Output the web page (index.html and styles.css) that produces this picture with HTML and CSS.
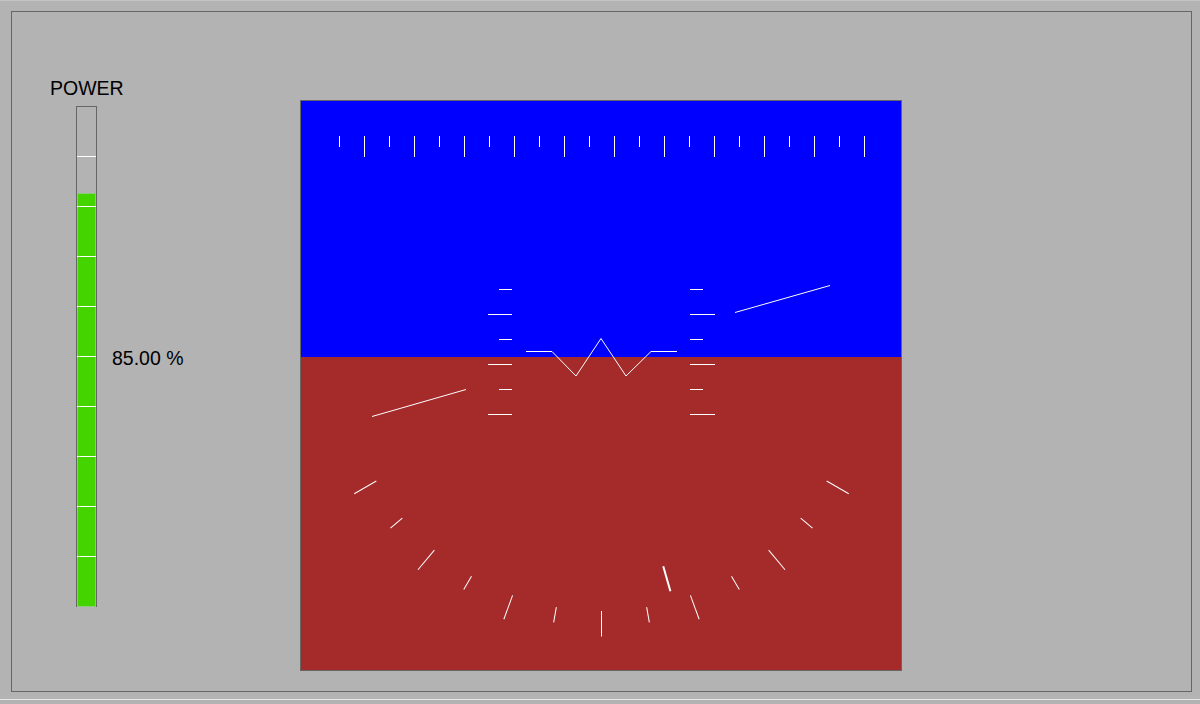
FILE: index.html
```html
<!DOCTYPE html>
<html>
<head>
<meta charset="utf-8">
<link rel="stylesheet" href="styles.css">
</head>
<body>
<div class="frame">
  <div class="power-col">
    <div class="label">POWER</div>
    <div class="bar-row">
      <div class="bar">
        <div class="fill" style="height:412px"></div>
      </div>
      <div class="value">85.00 %</div>
    </div>
  </div>
  <div class="gauge">
    <svg class="adi" width="600" height="569" viewBox="0 0 600 569">
      <rect class="sky" x="0" y="0" width="600" height="256"/>
      <rect class="ground" x="0" y="256" width="600" height="313"/>
      <g class="crisp">
        <line x1="38.5" y1="35" x2="38.5" y2="46"/>
        <line x1="63.5" y1="35" x2="63.5" y2="56"/>
        <line x1="88.5" y1="35" x2="88.5" y2="46"/>
        <line x1="113.5" y1="35" x2="113.5" y2="56"/>
        <line x1="138.5" y1="35" x2="138.5" y2="46"/>
        <line x1="163.5" y1="35" x2="163.5" y2="56"/>
        <line x1="188.5" y1="35" x2="188.5" y2="46"/>
        <line x1="213.5" y1="35" x2="213.5" y2="56"/>
        <line x1="238.5" y1="35" x2="238.5" y2="46"/>
        <line x1="263.5" y1="35" x2="263.5" y2="56"/>
        <line x1="288.5" y1="35" x2="288.5" y2="46"/>
        <line x1="313.5" y1="35" x2="313.5" y2="56"/>
        <line x1="338.5" y1="35" x2="338.5" y2="46"/>
        <line x1="363.5" y1="35" x2="363.5" y2="56"/>
        <line x1="388.5" y1="35" x2="388.5" y2="46"/>
        <line x1="413.5" y1="35" x2="413.5" y2="56"/>
        <line x1="438.5" y1="35" x2="438.5" y2="46"/>
        <line x1="463.5" y1="35" x2="463.5" y2="56"/>
        <line x1="488.5" y1="35" x2="488.5" y2="46"/>
        <line x1="513.5" y1="35" x2="513.5" y2="56"/>
        <line x1="538.5" y1="35" x2="538.5" y2="46"/>
        <line x1="563.5" y1="35" x2="563.5" y2="56"/>

        <line x1="198" y1="188.5" x2="211" y2="188.5"/>
        <line x1="187" y1="213.5" x2="211" y2="213.5"/>
        <line x1="198" y1="238.5" x2="211" y2="238.5"/>
        <line x1="187" y1="263.5" x2="211" y2="263.5"/>
        <line x1="198" y1="288.5" x2="211" y2="288.5"/>
        <line x1="187" y1="313.5" x2="211" y2="313.5"/>

        <line x1="389" y1="188.5" x2="402" y2="188.5"/>
        <line x1="389" y1="213.5" x2="414" y2="213.5"/>
        <line x1="389" y1="238.5" x2="402" y2="238.5"/>
        <line x1="389" y1="263.5" x2="414" y2="263.5"/>
        <line x1="389" y1="288.5" x2="402" y2="288.5"/>
        <line x1="389" y1="313.5" x2="414" y2="313.5"/>
      </g>
      <g class="thin">
        <polyline points="225,250.5 251,250.5 275,275 300,237.5 325,275 350,250.5 376,250.5"/>
        <line x1="71" y1="315.5" x2="165" y2="288.5"/>
        <line x1="434" y1="211.5" x2="529" y2="184.5"/>
      </g>
      <g class="thin" transform="translate(300.5 250)">
        <line x1="0" y1="260" x2="0" y2="285.5" transform="rotate(-60)"/>
        <line x1="0" y1="260" x2="0" y2="275.5" transform="rotate(-50)"/>
        <line x1="0" y1="260" x2="0" y2="285.5" transform="rotate(-40)"/>
        <line x1="0" y1="260" x2="0" y2="275.5" transform="rotate(-30)"/>
        <line x1="0" y1="260" x2="0" y2="285.5" transform="rotate(-20)"/>
        <line x1="0" y1="260" x2="0" y2="275.5" transform="rotate(-10)"/>
        <line x1="0" y1="260" x2="0" y2="285.5"/>
        <line x1="0" y1="260" x2="0" y2="275.5" transform="rotate(10)"/>
        <line x1="0" y1="260" x2="0" y2="285.5" transform="rotate(20)"/>
        <line x1="0" y1="260" x2="0" y2="275.5" transform="rotate(30)"/>
        <line x1="0" y1="260" x2="0" y2="285.5" transform="rotate(40)"/>
        <line x1="0" y1="260" x2="0" y2="275.5" transform="rotate(50)"/>
        <line x1="0" y1="260" x2="0" y2="285.5" transform="rotate(60)"/>
        <line class="pointer" x1="0" y1="224" x2="0" y2="250" transform="rotate(-16)"/>
      </g>
    </svg>
  </div>
</div>
<div class="status"></div>
</body>
</html>
```
FILE: styles.css
```css
html, body {
  margin: 0;
  padding: 0;
}
body {
  background: #b3b3b3;
  width: 1200px;
  height: 704px;
  overflow: hidden;
  font-family: "Liberation Sans", Arial, sans-serif;
  color: #000;
  border-top: 1px solid #c4c4c4;
  box-sizing: border-box;
}
.frame {
  margin: 10px 8px 0 11px;
  height: 679px;
  border: 1px solid #666;
  display: flex;
  align-items: flex-start;
}
.power-col {
  width: 250px;
  margin-left: 38px;
  margin-top: 66px;
  display: flex;
  flex-direction: column;
  align-items: flex-start;
}
.label {
  font-size: 19.5px;
  line-height: 20px;
  height: 20px;
}
.bar-row {
  margin-top: 8px;
  margin-left: 26px;
  display: flex;
  align-items: center;
}
.bar {
  position: relative;
  width: 19px;
  height: 499px;
  border: 1px solid #666;
  display: flex;
  flex-direction: column;
  justify-content: flex-end;
}
.fill {
  margin: 0 1px;
  background: #44d400;
  box-shadow: 0 0 0 1px #8fc97a;
}
.bar::after {
  content: "";
  position: absolute;
  left: 0;
  right: 0;
  top: 0;
  bottom: 0;
  background: repeating-linear-gradient(to bottom, transparent 0, transparent 49px, #fff 49px, #fff 50px);
}
.value {
  margin-left: 15px;
  margin-top: 2px;
  font-size: 19.5px;
  line-height: 20px;
  white-space: nowrap;
}
.gauge {
  margin-top: 88px;
  width: 600px;
  height: 569px;
  border: 1px solid #666;
}
.adi {
  display: block;
}
.sky {
  fill: #0000ff;
}
.ground {
  fill: #a52a2a;
}
.crisp line {
  stroke: #fff;
  stroke-width: 1;
  shape-rendering: crispEdges;
}
.thin line,
.thin polyline {
  stroke: #fff;
  stroke-width: 1;
  fill: none;
}
.thin .pointer {
  stroke-width: 2;
}
.status {
  margin-top: 7px;
  height: 0;
  border-top: 1px solid #e6e6e6;
}
```
